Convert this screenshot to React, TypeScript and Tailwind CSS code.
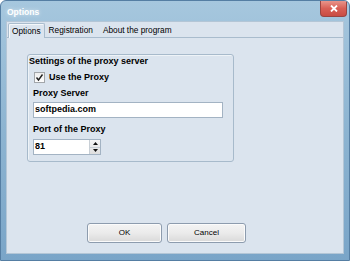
const font = "font-['Liberation_Sans',Arial,sans-serif]";

function Check() {
  return (
    <span className="flex h-[11px] w-[11px] items-center justify-center border border-[#a2a6aa] bg-gradient-to-b from-[#eeeeee] to-[#fdfdfd]">
      <svg width="9" height="9" viewBox="0 0 9 9">
        <path d="M1.5 4.5 L3.5 7 L7.5 1.5" fill="none" stroke="#222" strokeWidth="1.4" />
      </svg>
    </span>
  );
}

function Spinner() {
  return (
    <div className="flex w-[11px] flex-col border-l border-[#c8cfd6] bg-gradient-to-b from-[#f6f6f6] to-[#dedede]">
      <div className="flex flex-1 items-center justify-center border-b border-[#c8cfd6]">
        <svg width="5" height="3" viewBox="0 0 5 3">
          <path d="M0 3 L2.5 0 L5 3 Z" fill="#111" />
        </svg>
      </div>
      <div className="flex flex-1 items-center justify-center">
        <svg width="5" height="3" viewBox="0 0 5 3">
          <path d="M0 0 L5 0 L2.5 3 Z" fill="#111" />
        </svg>
      </div>
    </div>
  );
}

function Button({ label, w }: { label: string; w: string }) {
  return (
    <button
      className={`${w} flex h-[20px] items-center justify-center rounded-[3px] border border-[#8d9cae] bg-gradient-to-b from-[#f4f4f4] via-[#ebebeb] to-[#d9d9d9] text-[8px] text-black shadow-[inset_0_0_0_1px_#fbfbfb]`}
    >
      {label}
    </button>
  );
}

export default function App() {
  return (
    <div className={`${font} flex h-[261px] w-[350px] flex-col overflow-hidden rounded-t-[6px] border border-[#557ea3] bg-gradient-to-b from-[#a6c7de] via-[#8db4d1] to-[#7aa5c8]`}>
      {/* Title bar */}
      <div className="flex h-[20px] shrink-0 items-start justify-between pl-[6px] pr-[2px]">
        <span className="mt-[5px] text-[8.5px] font-bold text-white [text-shadow:0_0_4px_rgba(255,255,255,0.7)]">
          Options
        </span>
        <div className="flex h-[16px] w-[27px] items-center justify-center rounded-b-[4px] border border-t-0 border-[#9a4440] bg-gradient-to-b from-[#e8958b] via-[#d85f55] to-[#c94c43]">
          <svg width="8" height="7" viewBox="0 0 8 7">
            <path d="M1 0.5 L7 6.5 M7 0.5 L1 6.5" stroke="#fff" strokeWidth="1.8" />
          </svg>
        </div>
      </div>

      {/* Client area */}
      <div className="mx-[5px] mb-[6px] flex flex-1 flex-col border border-[#b4c6d6] bg-[#dbe4ee]">
        {/* Tab strip */}
        <div className="flex h-[16px] shrink-0 items-end border-b border-[#a9bccd] pl-[1px] text-[8.3px] text-black">
          <div className="-mb-px flex h-[15px] items-center rounded-t-[2px] border border-b-0 border-[#a9bccd] bg-[#dbe4ee] px-[3px] shadow-[inset_1px_1px_0_#f4f7fa]">
            Options
          </div>
          <div className="flex h-[13px] items-center px-[4px]">Registration</div>
          <div className="ml-[2px] flex h-[13px] items-center px-[4px]">About the program</div>
        </div>

        {/* Tab panel */}
        <div className="flex flex-1 flex-col pl-[20px] pt-[16px]">
          <div className="flex h-[108px] w-[207px] flex-col rounded-[3px] border border-[#a7bacb] pl-[1px] pt-[1px] text-[9px] font-bold text-black shadow-[inset_1px_1px_0_#eef3f7]">
            <div className="leading-[11px]">Settings of the proxy server</div>
            <div className="mt-[5px] flex items-center gap-[4px] pl-[5px]">
              <Check />
              <span className="leading-[11px]">Use the Proxy</span>
            </div>
            <div className="mt-[5px] pl-[4px] leading-[11px]">Proxy Server</div>
            <div className="ml-[4px] mt-[3px] flex h-[16px] w-[190px] items-center border border-[#a3b3c3] bg-white pl-[1px]">
              softpedia.com
            </div>
            <div className="mt-[6px] pl-[4px] leading-[11px]">Port of the Proxy</div>
            <div className="ml-[4px] mt-[4px] flex h-[16px] w-[68px] border border-[#a3b3c3] bg-white">
              <span className="flex flex-1 items-center pl-[1px]">81</span>
              <Spinner />
            </div>
          </div>

          <div className="mt-auto mb-[10px] flex gap-[5px] pl-[60px]">
            <Button label="OK" w="w-[75px]" />
            <Button label="Cancel" w="w-[79px]" />
          </div>
        </div>
      </div>
    </div>
  );
}
